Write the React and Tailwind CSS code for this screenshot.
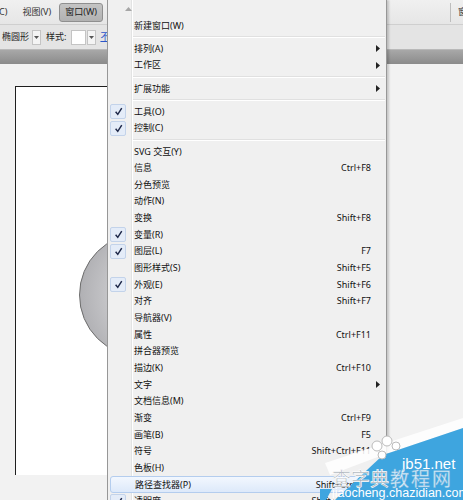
import React from 'react'

const menuItems = [
  { label: '新建窗口(W)' },
  { sep: true },
  { label: '排列(A)', sub: true },
  { label: '工作区', sub: true },
  { sep: true },
  { label: '扩展功能', sub: true },
  { sep: true },
  { label: '工具(O)', checked: true },
  { label: '控制(C)', checked: true },
  { sep: true },
  { label: 'SVG 交互(Y)' },
  { label: '信息', key: 'Ctrl+F8' },
  { label: '分色预览' },
  { label: '动作(N)' },
  { label: '变换', key: 'Shift+F8' },
  { label: '变量(R)', checked: true },
  { label: '图层(L)', key: 'F7', checked: true },
  { label: '图形样式(S)', key: 'Shift+F5' },
  { label: '外观(E)', key: 'Shift+F6', checked: true },
  { label: '对齐', key: 'Shift+F7' },
  { label: '导航器(V)' },
  { label: '属性', key: 'Ctrl+F11' },
  { label: '拼合器预览' },
  { label: '描边(K)', key: 'Ctrl+F10' },
  { label: '文字', sub: true },
  { label: '文档信息(M)' },
  { label: '渐变', key: 'Ctrl+F9' },
  { label: '画笔(B)', key: 'F5' },
  { label: '符号', key: 'Shift+Ctrl+F11' },
  { label: '色板(H)' },
  { label: '路径查找器(P)', key: 'Shift+Ctrl+F9', hover: true },
  { label: '透明度', key: 'Shift+Ctrl+F10', checked: true },
]

const CheckBox = () => (
  <div className="ml-[2px] w-[16px] h-[15px] rounded-[2px] border border-[#c3d3ea] bg-[#e4ecf8] flex items-center justify-center">
    <svg width="9" height="9" viewBox="0 0 10 10">
      <path d="M1.8 5.2 L4.2 8.2 L8.6 1.2" fill="none" stroke="#1d2748" strokeWidth="1.6" />
    </svg>
  </div>
)

const SubArrow = () => (
  <svg width="4" height="7" viewBox="0 0 4 7">
    <polygon points="0,0 4,3.5 0,7" fill="#222" />
  </svg>
)

const MenuRow = ({ item }) => {
  if (item.sep) {
    return (
      <div className="h-[6.5px] flex items-center">
        <div className="ml-[25px] mr-[1px] flex-1 border-t border-[#e0e0e0] border-b border-b-white" />
      </div>
    )
  }
  return (
    <div
      className={`h-[16.67px] flex items-center ${
        item.hover
          ? 'mx-[2px] rounded-[3px] border border-[#b4cdee] bg-gradient-to-b from-[#f2f7fe] to-[#dde9fa]'
          : ''
      }`}
    >
      <div className={`${item.hover ? 'w-[21px]' : 'w-[23px]'} flex items-center`}>
        {item.checked && <CheckBox />}
      </div>
      <span className="pl-[3px] flex-1 whitespace-nowrap">{item.label}</span>
      {item.key && <span className="whitespace-nowrap">{item.key}</span>}
      <div className={`${item.hover ? 'w-[13px]' : 'w-[15px]'} flex items-center pl-[5px]`}>
        {item.sub && <SubArrow />}
      </div>
    </div>
  )
}

const DropArrow = () => (
  <div className="w-[9px] h-[15px] bg-[#f4f4f4] border border-[#c4c4c4] flex items-center justify-center">
    <svg width="5" height="3" viewBox="0 0 5 3">
      <polygon points="0,0 5,0 2.5,3" fill="#555" />
    </svg>
  </div>
)

export default function App() {
  return (
    <div className="relative w-[463px] h-[500px] overflow-hidden bg-[#f2f2f2] text-[9px] text-[#111] font-['Noto_Sans','Noto_Sans_CJK_SC',sans-serif]">
      {/* menu bar */}
      <div className="h-[25px] flex items-center bg-gradient-to-b from-[#f0f0f0] to-[#e6e6e6] border-b border-[#cfcfcf]">
        <span className="ml-[-1px] text-[#333]">C)</span>
        <span className="ml-[15px] text-[#333]">视图(V)</span>
        <div className="ml-[8px] h-[19px] px-[5px] flex items-center rounded-[3px] border border-[#8f8f8f] bg-gradient-to-b from-[#c4c4c4] to-[#b2b2b2] text-[#222]">
          窗口(W)
        </div>
        <div className="ml-auto mr-[7px] h-[19px] border-l border-[#bdbdbd]" />
        <span className="mr-[-4px] text-[#333]">窗</span>
      </div>

      {/* control bar */}
      <div className="h-[25px] flex items-center bg-[#e4e4e4] border-b border-[#b9b9b9]">
        <span className="ml-[2px] text-[#222]">椭圆形</span>
        <div className="ml-[3px]"><DropArrow /></div>
        <span className="ml-[5px] text-[#222]">样式:</span>
        <div className="ml-[5px] w-[15px] h-[15px] bg-white border border-[#c4c4c4]" />
        <div className="ml-[1px]"><DropArrow /></div>
        <span className="ml-[4px] text-[#2b55c9] underline">不透明度</span>
      </div>

      {/* tab strip */}
      <div className="h-[14px] bg-gradient-to-b from-[#a8a8a8] to-[#8b8b8b]" />

      {/* canvas */}
      <div className="h-[411px] pl-[15px] pt-[22px]">
        <div className="relative w-[362px] h-full bg-white border-l border-t border-[#1f1f1f]">
          <div className="absolute left-[63px] top-[146px] w-[124px] h-[124px] rounded-full border border-[#6d6d6d] bg-[radial-gradient(circle_at_65%_50%,#e8e8ea,#c2c2c5_55%,#a1a1a5)]" />
        </div>
      </div>

      {/* dropdown menu */}
      <div className="absolute left-[107px] top-0 w-[280px] h-[500px] border-l border-r border-[#979797] shadow-[2px_0_2px_rgba(0,0,0,0.18)] bg-[linear-gradient(to_right,#f0f0f0_23px,#e2e3e3_23px,#e2e3e3_24px,#ffffff_24px,#ffffff_25px,#f0f0f0_25px)]">
        <div className="h-[17px] flex items-center pl-[17px]">
          <svg width="7" height="4" viewBox="0 0 7 4">
            <polygon points="0,4 7,4 3.5,0" fill="#a6a6a6" />
          </svg>
        </div>
        {menuItems.map((item, i) => (
          <MenuRow key={i} item={item} />
        ))}
      </div>

      {/* watermark */}
      <div className="absolute left-[320px] top-[415px] w-[143px] h-[85px]">
        <svg width="143" height="85" viewBox="0 0 143 85" className="absolute inset-0">
          <polygon points="5,48 143,3 143,13 63,40 10,60" fill="#ffffff" fillOpacity="0.85" />
          <polygon points="63,40 143,13 143,85 15,85" fill="#3ea5df" />
          <polygon points="0,74 12,74 6,85 0,85" fill="#3ea5df" />
          <circle cx="57" cy="31" r="5" fill="#fff" stroke="#bbb" />
          <circle cx="67" cy="26" r="5" fill="#fff" stroke="#bbb" />
          <circle cx="76" cy="31" r="4" fill="#fff" stroke="#bbb" />
          <circle cx="62" cy="40" r="4" fill="#fff" stroke="#bbb" />
        </svg>
        <span className="absolute left-[82px] top-[41px] text-[15px] leading-none text-white font-['Liberation_Sans',sans-serif]">jb51.net</span>
        <span className="absolute left-[12px] top-[53px] text-[19px] leading-none text-[#a3abb3] font-['Noto_Sans_CJK_SC',sans-serif] [-webkit-text-stroke:0.6px_#fff]">查字典</span>
        <span className="absolute left-[70px] top-[53px] text-[19px] leading-none tracking-[2px] text-white/80 font-['Noto_Sans_CJK_SC',sans-serif] [-webkit-text-stroke:0.4px_#7fb6dc]">教程网</span>
        <span className="absolute left-[12px] top-[72px] text-[12.5px] leading-none text-white font-['Liberation_Sans',sans-serif]">jiaocheng.chazidian.com</span>
      </div>
    </div>
  )
}
